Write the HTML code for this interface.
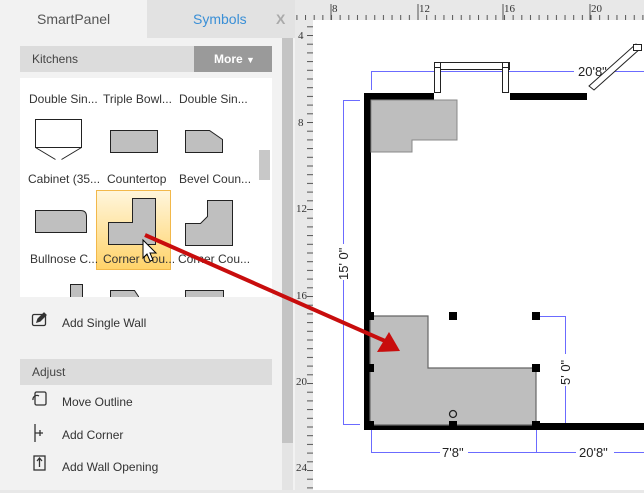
<!DOCTYPE html>
<html><head><meta charset="utf-8"><style>
*{margin:0;padding:0;box-sizing:border-box}
body{width:644px;height:493px;overflow:hidden;background:#f2f2f2;font-family:"Liberation Sans",sans-serif;position:relative}
.a{position:absolute}
.t{font-size:12px;color:#333;white-space:nowrap}
</style></head><body>
<!-- tabs -->
<div class="a" style="left:147px;top:0;width:148px;height:38px;background:#e2e2e2"></div>
<div class="a t" style="left:37px;top:11px;font-size:14px;color:#555">SmartPanel</div>
<div class="a t" style="left:193px;top:11px;font-size:14px;color:#3a8fd6">Symbols</div>
<div class="a t" style="left:276px;top:11px;font-size:14px;color:#aaa;font-weight:bold">X</div>
<!-- panel scrollbar -->
<div class="a" style="left:282px;top:38px;width:11px;height:405px;background:#c4c4c4"></div>
<div class="a" style="left:282px;top:443px;width:11px;height:50px;background:#e4e4e4"></div>
<!-- Kitchens header -->
<div class="a" style="left:20px;top:46px;width:252px;height:26px;background:#dcdcdc"></div>
<div class="a t" style="left:32px;top:52px;color:#444">Kitchens</div>
<div class="a" style="left:194px;top:46px;width:78px;height:26px;background:#9a9a9a;color:#fff;font-weight:bold;font-size:12px;line-height:26px;padding-left:20px">More <span style="font-size:9px">▼</span></div>
<!-- content box -->
<div class="a" style="left:20px;top:78px;width:252px;height:219px;background:#fff;overflow:hidden">
 <div class="a" style="left:239px;top:72px;width:11px;height:30px;background:#c8c8c8"></div>
 <div class="a" style="left:76px;top:112px;width:75px;height:80px;background:linear-gradient(#fff6dc,#ffd36a);border:1px solid #f2b84a"></div>
 <div class="a t" style="left:9px;top:14px">Double Sin...</div>
 <div class="a t" style="left:83px;top:14px">Triple Bowl...</div>
 <div class="a t" style="left:159px;top:14px">Double Sin...</div>
 <div class="a t" style="left:8px;top:94px">Cabinet (35...</div>
 <div class="a t" style="left:87px;top:94px">Countertop</div>
 <div class="a t" style="left:159px;top:94px">Bevel Coun...</div>
 <div class="a t" style="left:10px;top:174px">Bullnose C...</div>
 <div class="a t" style="left:83px;top:174px">Corner Cou...</div>
 <div class="a t" style="left:158px;top:174px">Corner Cou...</div>
 <svg class="a" style="left:0;top:0" width="252" height="219">
  <g stroke="#222" stroke-width="1" fill="#bfbfbf">
   <path d="M15.5 41.5h46v28h-46z" fill="#fff"/>
   <path d="M15.5 69.5l20 12M61.5 69.5l-20 12" fill="none"/>
   <path d="M90.5 52.5h47v22h-47z"/>
   <path d="M165.5 52.5h24l13 9v13h-37z"/>
   <path d="M15.5 132.5h45q6 0 6 6v16h-51z"/>
   <path d="M112.5 120.5h23v46h-47v-22h24z"/>
   <path d="M187.5 122.5h25v45h-47v-22h15l7-7z"/>
   <path d="M50.5 206.5h12v15h-12z"/>
   <path d="M90.5 212.5h24l4 6v5h-28z"/>
   <path d="M165.5 212.5h38v10h-38z"/>
  </g>
 </svg>
</div>
<!-- bottom list -->
<svg class="a" style="left:30px;top:310px" width="20" height="180" fill="none" stroke="#333" stroke-width="1.3">
 <rect x="2.5" y="4.5" width="13" height="11" rx="1.5"/><path d="M7 12l1-3 6-6 2 2-6 6z" fill="#333"/>
 <rect x="5" y="82" width="11" height="13" rx="1.5"/><path d="M3 90a4 4 0 0 1 6-4" />
 <path d="M5 114v18M5 123h8M10 120v6"/>
 <rect x="4" y="146" width="11" height="14"/><path d="M9.5 157v-8M7 151l2.5-3 2.5 3"/>
</svg>
<div class="a t" style="left:62px;top:316px">Add Single Wall</div>
<div class="a" style="left:20px;top:359px;width:252px;height:26px;background:#dcdcdc"></div>
<div class="a t" style="left:32px;top:365px;color:#444">Adjust</div>
<div class="a t" style="left:62px;top:395px">Move Outline</div>
<div class="a t" style="left:62px;top:428px">Add Corner</div>
<div class="a t" style="left:62px;top:460px">Add Wall Opening</div>
<!-- canvas -->
<svg class="a" style="left:295px;top:0" width="349" height="493" font-family="Liberation Serif,serif" font-size="11">
 <defs>
  <pattern id="tx" x="36" y="0" width="8.65" height="20" patternUnits="userSpaceOnUse"><line x1="0.5" y1="15" x2="0.5" y2="20" stroke="#555"/></pattern>
  <pattern id="ty" x="0" y="35" width="18" height="8.7" patternUnits="userSpaceOnUse"><line x1="12" y1="0.5" x2="18" y2="0.5" stroke="#555"/></pattern>
 </defs>
 <rect width="349" height="493" fill="#e8e8e8"/>
 <rect x="0" y="14" width="349" height="6" fill="url(#tx)"/>
 <rect x="0" y="20" width="18" height="473" fill="url(#ty)"/>
 <g fill="#333"><text x="37" y="12">8</text><text x="124" y="12">12</text><text x="209" y="12">16</text><text x="296" y="12">20</text>
 <text x="3" y="39">4</text><text x="3" y="126">8</text><text x="1" y="212">12</text><text x="1" y="299">16</text><text x="1" y="385">20</text><text x="1" y="471">24</text></g>
 <g stroke="#555"><line x1="36" y1="4" x2="36" y2="20"/><line x1="123" y1="4" x2="123" y2="20"/><line x1="208" y1="4" x2="208" y2="20"/><line x1="295" y1="4" x2="295" y2="20"/></g>
 <rect x="18" y="20" width="331" height="470" fill="#fff"/>
</svg>
<svg class="a" style="left:0;top:0" width="644" height="493" font-family="Liberation Sans,sans-serif" font-size="12">
 <g stroke="#6b6bff" fill="none">
  <path d="M371.5 90V71.5H644"/>
  <path d="M360 100.5H343.5V424.5H360"/>
  <path d="M538 316.5H565.5V424.5H540"/>
  <path d="M371.5 430V452.5H536.5V430M536 452.5H644"/>
 </g>
 <rect x="574" y="64" width="40" height="14" fill="#fff"/><text x="578" y="76" fill="#222" font-size="13">20'8"</text>
 <rect x="336" y="244" width="14" height="36" fill="#fff"/><text transform="translate(348,280) rotate(-90)" fill="#222" font-size="13">15' 0"</text>
 <rect x="558" y="354" width="14" height="32" fill="#fff"/><text transform="translate(570,385) rotate(-90)" fill="#222" font-size="13">5' 0"</text>
 <rect x="440" y="446" width="28" height="14" fill="#fff"/><text x="442" y="457" fill="#222" font-size="13">7'8"</text>
 <rect x="576" y="446" width="38" height="14" fill="#fff"/><text x="579" y="457" fill="#222" font-size="13">20'8"</text>
 <!-- walls -->
 <g fill="#000"><rect x="364" y="93" width="70" height="7"/><rect x="510" y="93" width="77" height="7"/><rect x="364" y="93" width="7" height="337"/><rect x="364" y="423" width="280" height="7"/></g>
 <!-- window -->
 <g fill="#fff" stroke="#222"><rect x="434.5" y="62.5" width="75" height="7"/><rect x="434.5" y="62.5" width="6" height="30"/><rect x="502.5" y="62.5" width="6" height="30"/><rect x="434.5" y="62.5" width="6" height="5"/><rect x="502.5" y="62.5" width="6" height="5"/>
  <path d="M589 86l47-42 5 4-47 42z"/><rect x="633.5" y="44.5" width="8" height="6"/></g>
 <!-- gray blocks -->
 <path d="M371 100H457V140H412V152H371z" fill="#bebebe" stroke="#888"/>
 <path d="M370 316H428V368H536V425H370z" fill="#bebebe" stroke="#666" stroke-width="1.2"/>
 <g fill="#000"><rect x="366" y="312" width="8" height="8"/><rect x="449" y="312" width="8" height="8"/><rect x="532" y="312" width="8" height="8"/><rect x="366" y="364" width="8" height="8"/><rect x="532" y="364" width="8" height="8"/><rect x="366" y="421" width="8" height="8"/><rect x="449" y="421" width="8" height="8"/><rect x="532" y="421" width="8" height="8"/></g>
 <circle cx="453" cy="414" r="3.5" fill="none" stroke="#222" stroke-width="1.3"/>
 <!-- arrow -->
 <line x1="145" y1="235" x2="385" y2="341" stroke="#c80d0d" stroke-width="4"/>
 <path d="M400 351L377 352L389 332z" fill="#c80d0d"/>
 <!-- cursor -->
 <path d="M143 240v18l4-4 3 7 3-1-3-7h6z" fill="#fff" stroke="#000" stroke-width="1"/>
 <rect x="0" y="490" width="644" height="3" fill="#e8e8e8"/>
</svg>
</body></html>
